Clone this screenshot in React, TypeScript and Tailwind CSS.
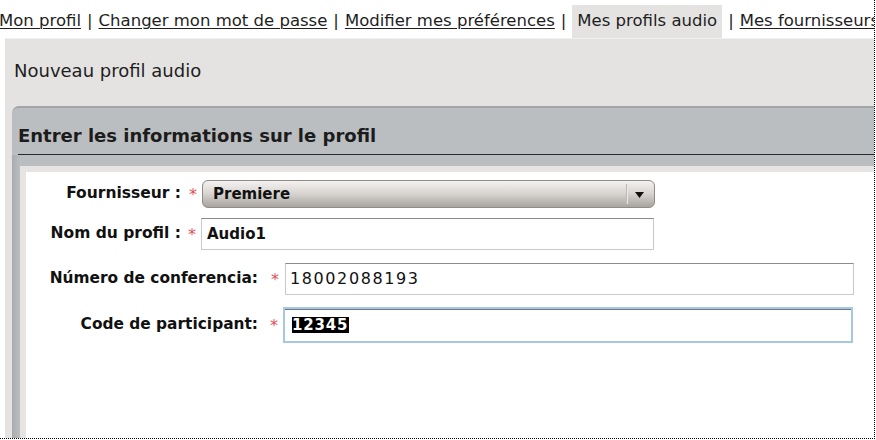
import React from "react";

const NAV = [
  { label: "Mon profil", active: false },
  { label: "Changer mon mot de passe", active: false },
  { label: "Modifier mes préférences", active: false },
  { label: "Mes profils audio", active: true },
  { label: "Mes fournisseurs", active: false },
];

function Star() {
  return <span className="inline-block pt-[5px] text-[16px] leading-none text-[#e0525a]">*</span>;
}

export default function App() {
  return (
    <div className="w-[876px] h-[440px] bg-white overflow-hidden" style={{ fontFamily: '"DejaVu Sans", Verdana, sans-serif' }}>
      <div className="w-[875px] h-[439px] border-r border-b border-dotted border-black overflow-hidden flex flex-col">
        {/* top nav */}
        <nav className="h-[38px] shrink-0 flex items-center pt-[5px] -ml-[1px] text-[16.5px] text-[#1e1e1e] whitespace-nowrap">
          {NAV.map((n, i) => (
            <React.Fragment key={n.label}>
              {i > 0 && <span className="px-[6px]">|</span>}
              {n.active ? (
                <span className="bg-[#e4e3e1] px-[5px] py-[4px]">{n.label}</span>
              ) : (
                <a className="underline underline-offset-2 decoration-1 cursor-pointer">{n.label}</a>
              )}
            </React.Fragment>
          ))}
        </nav>

        {/* gray page area */}
        <div className="flex-1 ml-[5px] bg-[#e4e3e1] border-t border-[#f1f0ee] flex flex-col min-h-0">
          <div className="h-[67px] shrink-0 flex items-center pl-[9px] pb-[5px] text-[18px] text-[#1e1e1e]">
            Nouveau profil audio
          </div>

          {/* panel */}
          <div className="flex-1 ml-[7px] bg-[#bbbec0] rounded-tl-[7px] border-t-2 border-[#a2a5a7] flex flex-col min-h-0">
            <div className="h-[47px] shrink-0 ml-[6px] border-b border-[#2a2a2a] flex items-end pb-[5px] text-[18px] font-bold text-[#1c1c1c]">
              Entrer les informations sur le profil
            </div>
            <div className="flex-1 pt-[11px] pl-[8px] flex flex-col min-h-0 bg-gradient-to-r from-[#a9acae] to-[#bbbec0] bg-no-repeat" style={{ backgroundSize: "8px 100%" }}>
              <div className="flex-1 bg-white border-t-[6px] border-l-[6px] border-[#e7e5e3] pt-[8px] text-[#111]">
                {/* Fournisseur */}
                <div className="flex items-center h-[28px]">
                  <label className="w-[155px] text-right text-[15.5px] font-bold whitespace-nowrap">Fournisseur :</label>
                  <div className="w-[21px] text-right pr-[5px]"><Star /></div>
                  <div className="relative w-[453px] h-[28px] rounded-[6px] border border-[#8e8b88] bg-gradient-to-b from-[#f4f2f0] via-[#d6d3d0] to-[#a8a49f] flex items-center">
                    <span className="pl-[10px] text-[15px] font-bold">Premiere</span>
                    <span className="absolute right-[26px] top-[3px] bottom-[3px] w-[2px] border-l border-[#bdb9b5] bg-[#ebe9e7]" />
                    <svg className="absolute right-[10px] top-[11px]" width="9" height="6" viewBox="0 0 9 6">
                      <path d="M0 0h9L4.5 6z" fill="#111" />
                    </svg>
                  </div>
                </div>

                {/* Nom du profil */}
                <div className="flex items-center h-[32px] mt-[10px]">
                  <label className="w-[155px] text-right text-[15.5px] font-bold whitespace-nowrap">Nom du profil :</label>
                  <div className="w-[20px] text-right pr-[5px]"><Star /></div>
                  <div className="w-[453px] h-[32px] border border-[#c9c9c9] border-t-[#8a8a8a] flex items-center pl-[5px] text-[15px] font-bold">
                    Audio1
                  </div>
                </div>

                {/* Numéro de conferencia */}
                <div className="flex items-center h-[32px] mt-[13px]">
                  <label className="w-[232px] text-right text-[15.4px] font-bold whitespace-nowrap">Número de conferencia:</label>
                  <div className="w-[27px] text-right pr-[6px]"><Star /></div>
                  <div className="w-[569px] h-[32px] border border-[#cacaca] border-t-[#8c8c8c] flex items-center pl-[4px] text-[16px] tracking-[1.6px]">
                    18002088193
                  </div>
                </div>

                {/* Code de participant */}
                <div className="flex items-center h-[36px] mt-[12px]">
                  <label className="w-[232px] text-right text-[15.4px] font-bold whitespace-nowrap">Code de participant:</label>
                  <div className="w-[25px] text-right pr-[5px]"><Star /></div>
                  <div className="w-[570px] h-[36px] border-2 border-[#a6c8e2] shadow-[inset_0_1px_0_#6d7884] flex items-center pl-[7px]">
                    <span className="bg-black text-white text-[15px] font-bold leading-[16px] tracking-[0.8px] pr-[1px]">12345</span>
                  </div>
                </div>
              </div>
            </div>
          </div>
        </div>
      </div>
    </div>
  );
}
